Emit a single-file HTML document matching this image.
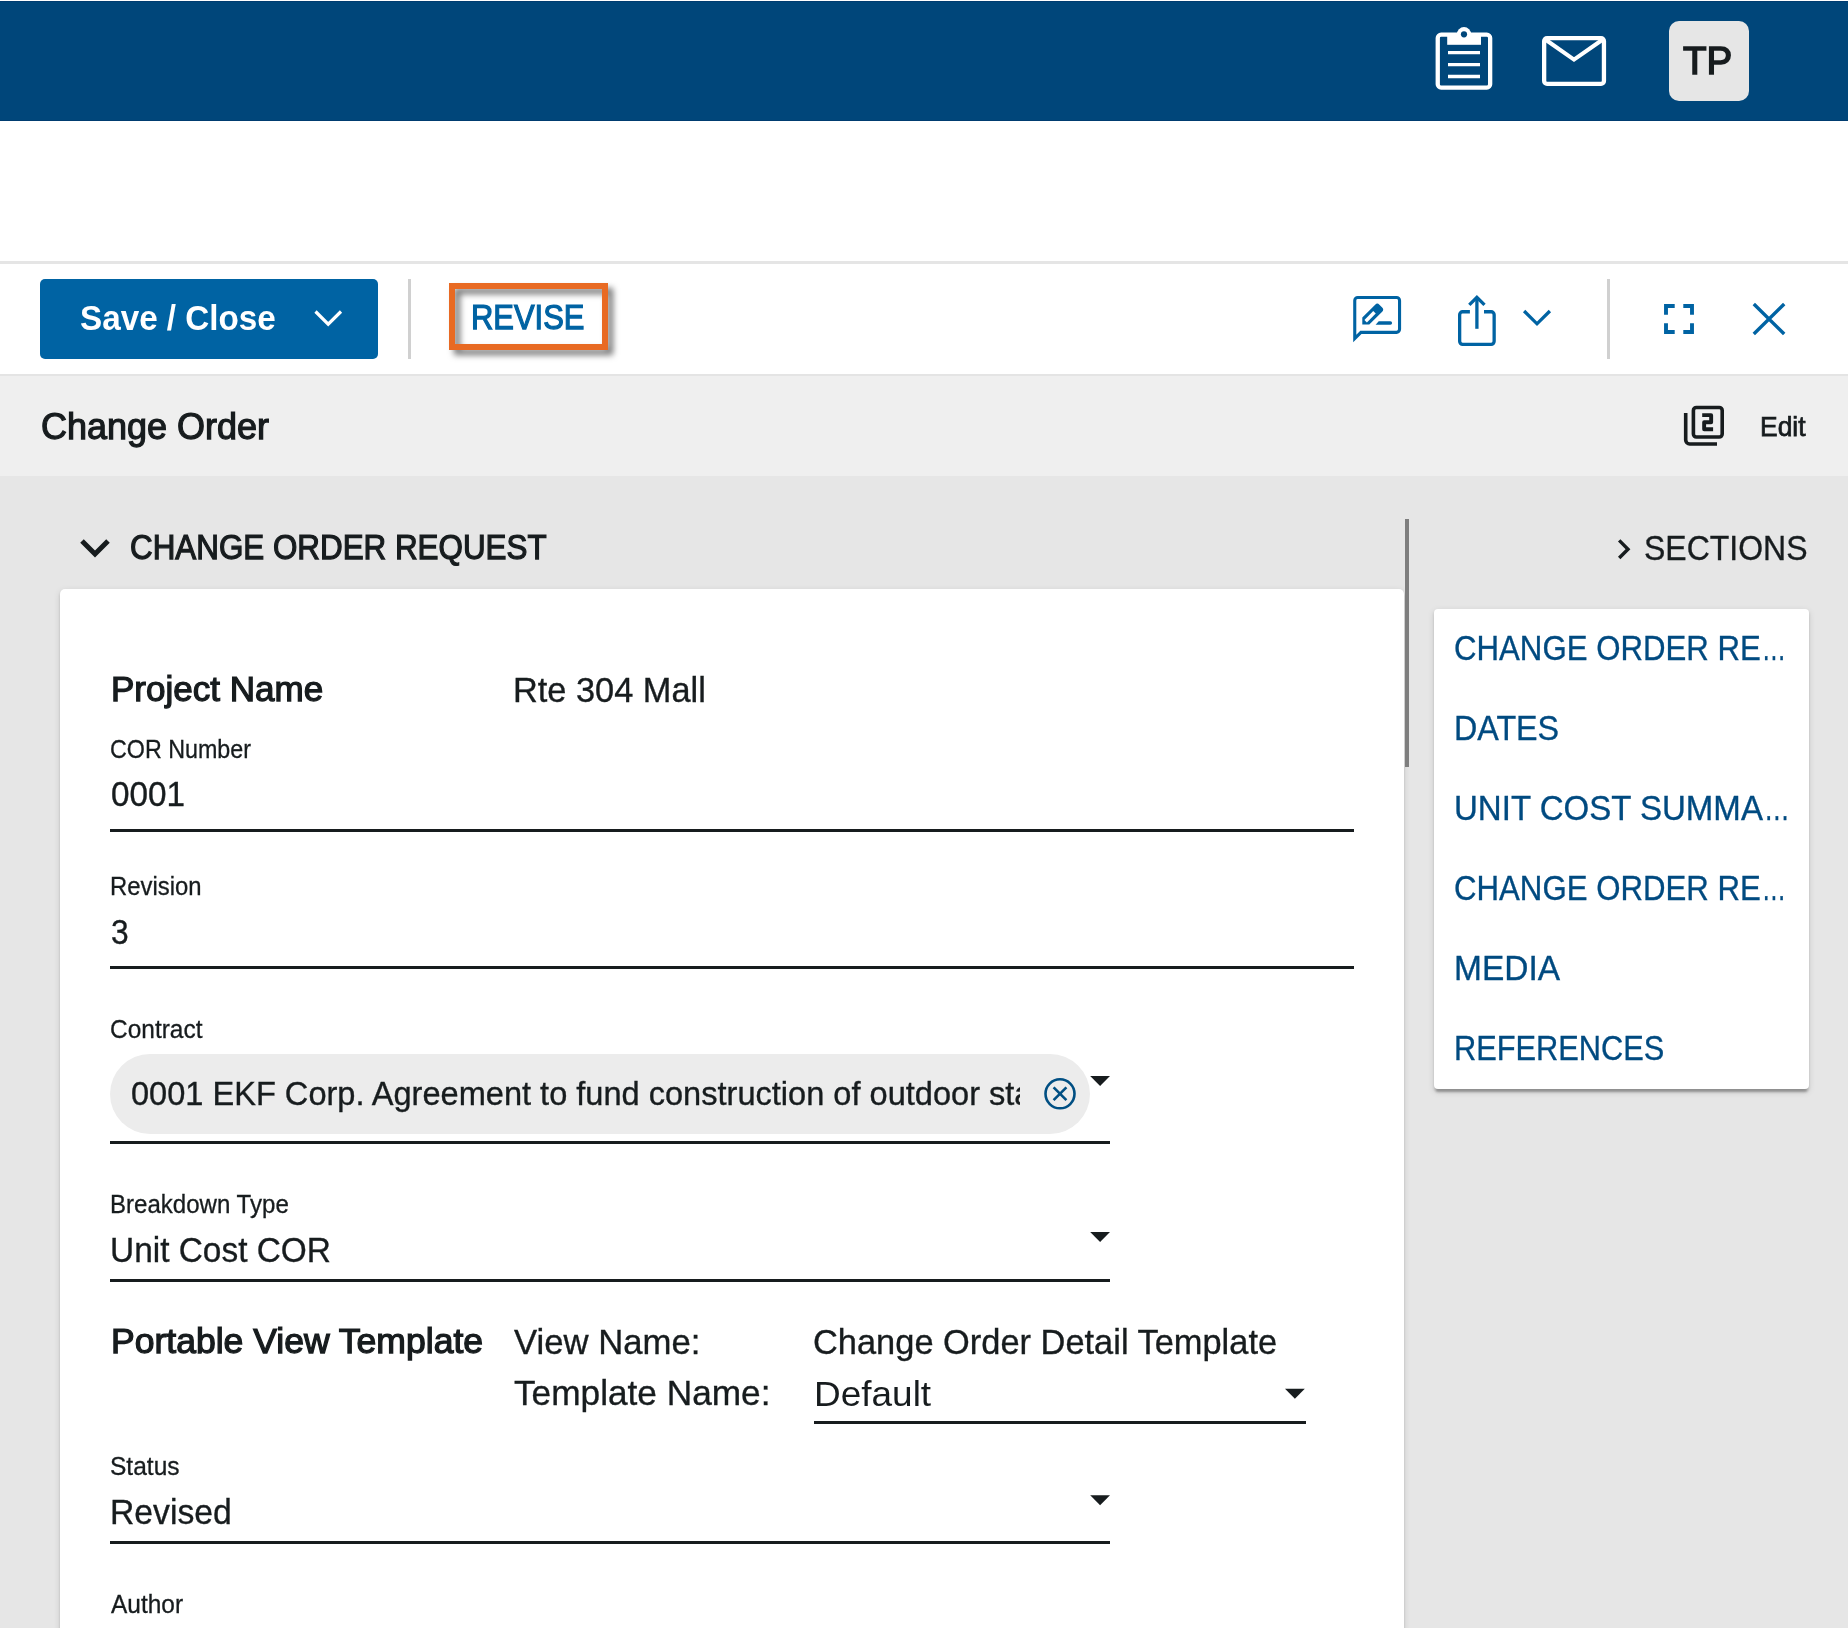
<!DOCTYPE html>
<html lang="en"><head><meta charset="utf-8"><title>Change Order</title>
<style>
*{box-sizing:border-box;margin:0;padding:0}
html,body{width:1848px;height:1628px;overflow:hidden;background:#e6e6e6}
body{position:relative;font-family:"Liberation Sans",sans-serif;color:#171c1e}
.abs{position:absolute}
.t{position:absolute;line-height:1;white-space:nowrap;font-weight:400;transform-origin:0 0}
.t.rg{-webkit-text-stroke:0.35px currentColor}
.t.lb{-webkit-text-stroke:0.3px currentColor}
.t.md{-webkit-text-stroke:1.25px currentColor}
#tp{-webkit-text-stroke:1.5px currentColor}
.t.eb{-webkit-text-stroke:0.75px currentColor}
.t.bd{font-weight:700;-webkit-text-stroke:0}
.el{display:inline-block;width:.7em;transform:scaleX(.78);transform-origin:0 0;margin-left:.02em}
.hdr{left:0;top:1px;width:1848px;height:120px;background:#00467a;border-top:1px solid #003c70;border-bottom:1px solid #003c70}
.toprow{left:0;top:0;width:1848px;height:1px;background:#fff}
.gap{left:0;top:121px;width:1848px;height:140px;background:#fff}
.gapline{left:0;top:261px;width:1848px;height:3px;background:#e5e5e5}
.tb{left:0;top:264px;width:1848px;height:110px;background:#fff}
.tbline{left:0;top:374px;width:1848px;height:2px;background:#e4e4e4}
.titlebar{left:0;top:376px;width:1848px;height:100px;background:#efefef}
.savebtn{left:40px;top:279px;width:338px;height:80px;background:#0063a3;border-radius:5px}
.vsep{width:2.5px;height:80px;top:279px;background:#d0d0d0}
.revbox{left:449px;top:283px;width:159px;height:67px;border:6px solid #e86a23;filter:drop-shadow(5px 5px 3px rgba(0,0,0,.55))}
.avatar{left:1669px;top:21px;width:80px;height:80px;border-radius:10px;background:#e6e6e6}
.card{left:60px;top:589px;width:1344px;height:1100px;background:#fff;border-radius:5px;box-shadow:0 5px 2.5px -2.5px rgba(0,0,0,.2),0 2.5px 2.5px rgba(0,0,0,.14),0 2.5px 7.5px rgba(0,0,0,.12)}
.thumb{left:1405px;top:519px;width:4px;height:247.6px;background:#7e7e7e}
.panel{left:1434px;top:609px;width:375px;height:480px;background:#fff;border-radius:4px;box-shadow:0 5px 2.5px -2.5px rgba(0,0,0,.2),0 2.5px 2.5px rgba(0,0,0,.14),0 2.5px 7.5px rgba(0,0,0,.12)}
.ul{height:3px;background:#171c1e}
.chip{left:110px;top:1054px;width:980px;height:80px;border-radius:40px;background:#ececec;overflow:hidden}
.chiptxt{position:absolute;left:0;top:0;width:910px;height:80px;overflow:hidden}
svg{position:absolute;overflow:visible;pointer-events:none}
a.t{text-decoration:none;cursor:pointer}
h1.t,h2.t{font-weight:400}
</style></head><body>
<header>
<div class="abs toprow"></div><div class="abs hdr"></div>
<svg width="1848" height="1628" viewBox="0 0 1848 1628" style="left:0;top:0" fill="none" stroke-linecap="butt" stroke-linejoin="miter">
<rect x="1437.75" y="34.65" width="52.4" height="52.9" rx="3.4" stroke="#fff" stroke-width="4.3"/>
<rect x="1447.2" y="33" width="33.8" height="11.8" fill="#fff"/>
<circle cx="1464" cy="34.2" r="7.1" fill="#fff"/>
<circle cx="1464" cy="34.3" r="3.1" fill="#00467a"/>
<path d="M1448 52.6H1480M1448 64.6H1480M1448 76.5H1480" stroke="#fff" stroke-width="3.3"/>
<rect x="1544.15" y="38.15" width="59.8" height="45.8" rx="2.9" stroke="#fff" stroke-width="4.3"/>
<path d="M1544.6 39L1574 59.6L1603.5 39" stroke="#fff" stroke-width="4.1"/>
</svg>
<div class="abs avatar"></div><span class="t md" id="tp" style="left:1683.00px;top:42.23px;font-size:38.6px;transform:scaleX(1.0004);color:#171c1e">TP</span>
</header>
<div class="toolbar">
<div class="abs gap"></div><div class="abs gapline"></div>
<div class="abs tb"></div><div class="abs tbline"></div>
<div class="abs savebtn"></div><span class="t bd" id="save" style="left:80.20px;top:300.56px;font-size:35.6px;transform:scaleX(0.9341);color:#ffffff">Save / Close</span>
<div class="abs vsep" style="left:408px"></div>
<div class="abs revbox"></div><span class="t md" id="rev" style="left:471.00px;top:299.50px;font-size:34.5px;transform:scaleX(0.8960);color:#0063a3">REVISE</span>
<div class="abs vsep" style="left:1607px"></div>
<svg width="1848" height="1628" viewBox="0 0 1848 1628" style="left:0;top:0" fill="none" stroke-linecap="butt" stroke-linejoin="miter">
<path d="M315.5 311.5L328.2 324.2L341 311.5" stroke="#fff" stroke-width="3.2"/>
<path d="M1360.9 332.35L1354.75 338.5V300.45a3 3 0 0 1 3-3H1396.55a3 3 0 0 1 3 3V329.35a3 3 0 0 1-3 3z" stroke="#0063a3" stroke-width="3.1" stroke-linejoin="miter"/>
<g transform="translate(1362.3 317.5) rotate(-45)">
<path d="M0 0L-4.95 4.95L0 9.9H18.2a3 3 0 0 0 3-3V3a3 3 0 0 0-3-3z" fill="#0063a3"/>
<path d="M-0.2 4.95H12.3" stroke="#fff" stroke-width="3.5"/>
</g>
<path d="M1375.6 324.7L1378.7 321.3H1390.4a1.7 1.7 0 0 1 0 3.4z" fill="#0063a3"/>
<g stroke="#0063a3" stroke-width="3.3">
<path d="M1469.9 311.75H1462.65a3 3 0 0 0-3 3V341.35a3 3 0 0 0 3 3h28.5a3 3 0 0 0 3-3V314.75a3 3 0 0 0-3-3H1484"/>
<path d="M1476.9 328.8V297.6"/>
<path d="M1469.3 304.9L1476.9 297.3L1484.5 304.9"/>
</g>
<path d="M1524.1 311L1537 323.8L1549.9 311" stroke="#0063a3" stroke-width="3.3"/>
<g stroke="#0063a3" stroke-width="3.9">
<path d="M1666 314.7V306H1674.7M1683.3 306H1692V314.7M1692 323.3V332H1683.3M1674.7 332H1666V323.3"/>
</g>
<path d="M1753.8 304L1784.2 334M1784.2 304L1753.8 334" stroke="#0063a3" stroke-width="3.4"/>
</svg>
</div>
<div class="pagetitle">
<div class="abs titlebar"></div>
<h1 class="t md" id="title" style="left:40.80px;top:408.31px;font-size:37.2px;transform:scaleX(0.9678);color:#171c1e">Change Order</h1>
<svg width="1848" height="1628" viewBox="0 0 1848 1628" style="left:0;top:0" fill="none" stroke-linecap="butt" stroke-linejoin="miter">
<g stroke="#171c1e" stroke-width="3.6">
<rect x="1693.4" y="407.5" width="28.8" height="29.5" rx="3"/>
<path d="M1685.7 413V440a4 4 0 0 0 4 4H1717"/>
</g>
<path d="M1702.2 415.15H1711.15V422.2H1704.15V429.25H1713.1" stroke="#171c1e" stroke-width="3.9" stroke-linejoin="round"/>
</svg>
<span class="t eb" id="edit" style="left:1760.10px;top:413.44px;font-size:27.6px;transform:scaleX(0.9584);color:#171c1e">Edit</span>
</div>
<main>
<h2 class="t md" id="sec" style="left:130.20px;top:529.60px;font-size:34.5px;transform:scaleX(0.9094);color:#171c1e">CHANGE ORDER REQUEST</h2>
<section>
<div class="abs card"></div>
<label class="t md" id="pn" style="left:111.20px;top:671.70px;font-size:34.5px;transform:scaleX(1.0155);color:#171c1e">Project Name</label><span class="t rg" id="pnv" style="left:513.20px;top:672.60px;font-size:35.8px;transform:scaleX(0.9596);color:#171c1e">Rte 304 Mall</span>
<label class="t lb" id="l1" style="left:109.60px;top:737.41px;font-size:25.5px;transform:scaleX(0.9130);color:#171c1e">COR Number</label><span class="t rg" id="v1" style="left:111.40px;top:777.45px;font-size:34.2px;transform:scaleX(0.9735);color:#171c1e">0001</span><div class="abs ul" style="left:110px;top:828.7px;width:1244px"></div>
<label class="t lb" id="l2" style="left:109.80px;top:874.31px;font-size:25.5px;transform:scaleX(0.9354);color:#171c1e">Revision</label><span class="t rg" id="v2" style="left:111.10px;top:914.65px;font-size:34.2px;transform:scaleX(0.9278);color:#171c1e">3</span><div class="abs ul" style="left:110px;top:965.7px;width:1244px"></div>
<label class="t lb" id="l3" style="left:110.00px;top:1017.41px;font-size:25.5px;transform:scaleX(0.9594);color:#171c1e">Contract</label>
<div class="abs chip"><div class="chiptxt"><span class="t rg" id="chip" style="left:21.20px;top:23.53px;font-size:32.8px;transform:scaleX(0.9929);color:#171c1e">0001 EKF Corp. Agreement to fund construction of outdoor stadium</span></div></div>
<div class="abs ul" style="left:110px;top:1140.8px;width:1000px"></div>
<label class="t lb" id="l4" style="left:109.80px;top:1192.41px;font-size:25.5px;transform:scaleX(0.9434);color:#171c1e">Breakdown Type</label><span class="t rg" id="v4" style="left:110.10px;top:1232.90px;font-size:35.8px;transform:scaleX(0.9335);color:#171c1e">Unit Cost COR</span><div class="abs ul" style="left:110px;top:1278.7px;width:1000px"></div>
<label class="t md" id="pv" style="left:110.80px;top:1323.70px;font-size:34.5px;transform:scaleX(1.0300);color:#171c1e">Portable View Template</label><label class="t rg" id="vn" style="left:513.70px;top:1325.00px;font-size:35.8px;transform:scaleX(0.9695);color:#171c1e">View Name:</label><span class="t rg" id="vnv" style="left:813.40px;top:1324.90px;font-size:35.8px;transform:scaleX(0.9611);color:#171c1e">Change Order Detail Template</span><label class="t rg" id="tn" style="left:513.70px;top:1375.80px;font-size:35.8px;transform:scaleX(0.9841);color:#171c1e">Template Name:</label><span class="t pl" id="def" style="left:814.10px;top:1377.40px;font-size:34.5px;transform:scaleX(1.0713);color:#171c1e">Default</span><div class="abs ul" style="left:813.5px;top:1420.6px;width:492.0px"></div>
<label class="t lb" id="l5" style="left:109.80px;top:1454.11px;font-size:25.5px;transform:scaleX(0.9620);color:#171c1e">Status</label><span class="t rg" id="v5" style="left:110.10px;top:1494.50px;font-size:35.8px;transform:scaleX(0.9421);color:#171c1e">Revised</span><div class="abs ul" style="left:110px;top:1540.6px;width:1000px"></div>
<label class="t lb" id="l6" style="left:110.90px;top:1591.61px;font-size:25.5px;transform:scaleX(0.9587);color:#171c1e">Author</label>
<svg width="1848" height="1628" viewBox="0 0 1848 1628" style="left:0;top:0" fill="none" stroke-linecap="butt" stroke-linejoin="miter">
<path d="M82 541L95 554L108 541" stroke="#171c1e" stroke-width="5"/>
<circle cx="1060" cy="1093.8" r="14.5" stroke="#004f83" stroke-width="2.6"/>
<path d="M1053.6 1087.4L1066.4 1100.2M1066.4 1087.4L1053.6 1100.2" stroke="#004f83" stroke-width="2.6"/>
<g fill="#171c1e">
<path d="M1090.2 1076H1110L1100.1 1086z"/>
<path d="M1090.2 1232H1110L1100.1 1242z"/>
<path d="M1285 1388.8H1304.8L1294.9 1398.8z"/>
<path d="M1090.2 1495.2H1110L1100.1 1505.2z"/>
</g>
</svg>
</section>
<div class="abs thumb"></div>
</main>
<aside>
<h2 class="t rg" id="sects" style="left:1644.00px;top:531.40px;font-size:35.8px;transform:scaleX(0.8934);color:#171c1e">SECTIONS</h2>
<svg width="1848" height="1628" viewBox="0 0 1848 1628" style="left:0;top:0" fill="none" stroke-linecap="butt" stroke-linejoin="miter">
<path d="M1619.2 540.4L1628 549.2L1619.2 558" stroke="#171c1e" stroke-width="3.4"/>
</svg>
<nav><div class="abs panel"></div>
<a class="t rg" id="s1" style="left:1454.00px;top:631.40px;font-size:35.8px;transform:scaleX(0.8715);color:#004a80">CHANGE ORDER RE<span class="el">…</span></a>
<a class="t rg" id="s2" style="left:1454.00px;top:710.50px;font-size:35.8px;transform:scaleX(0.9009);color:#004a80">DATES</a>
<a class="t rg" id="s3" style="left:1454.00px;top:791.40px;font-size:35.8px;transform:scaleX(0.9227);color:#004a80">UNIT COST SUMMA<span class="el">…</span></a>
<a class="t rg" id="s4" style="left:1454.00px;top:871.40px;font-size:35.8px;transform:scaleX(0.8715);color:#004a80">CHANGE ORDER RE<span class="el">…</span></a>
<a class="t rg" id="s5" style="left:1454.00px;top:951.40px;font-size:35.8px;transform:scaleX(0.9358);color:#004a80">MEDIA</a>
<a class="t rg" id="s6" style="left:1454.00px;top:1031.40px;font-size:35.8px;transform:scaleX(0.8599);color:#004a80">REFERENCES</a>
</nav></aside>
</body></html>
